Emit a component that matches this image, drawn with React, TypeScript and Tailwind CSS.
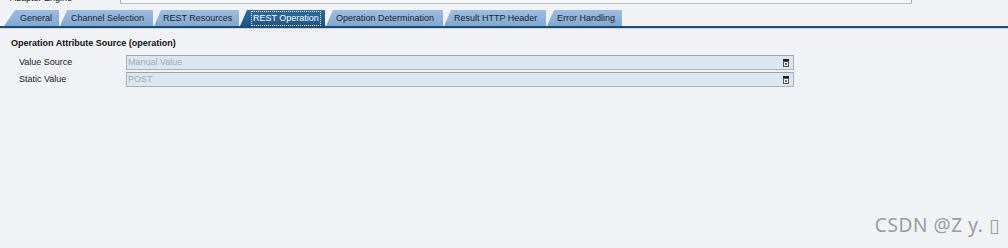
import React from "react";

const tabs = [
  { label: "General", w: 56, slant: 11, pl: 16 },
  { label: "Channel Selection", w: 94, pl: 11 },
  { label: "REST Resources", w: 86, pl: 9 },
  { label: "REST Operation", w: 86, pl: 11, active: true },
  { label: "Operation Determination", w: 118, pl: 10 },
  { label: "Result HTTP Header", w: 103, pl: 10 },
  { label: "Error Handling", w: 76, pl: 10 },
];

function DropIcon() {
  return (
    <svg width="6" height="8" viewBox="0 0 6 8" className="shrink-0">
      <rect x="0" y="0" width="6" height="2" fill="#222" />
      <rect x="0.5" y="2.5" width="5" height="5" fill="#f4f4f4" stroke="#555" strokeWidth="1" />
      <rect x="2" y="4" width="2" height="2" fill="#777" />
    </svg>
  );
}

function Field({ value }: { value: string }) {
  return (
    <div className="w-[668px] h-[15px] flex items-center justify-between bg-[#dbe6f1] border border-[#a9b2bb] border-t-[#9aa3ac] pl-[1px] pr-[4px]">
      <span className="text-[9px] text-[#a3abb4] leading-none">{value}</span>
      <DropIcon />
    </div>
  );
}

export default function App() {
  return (
    <div
      className="w-[1008px] h-[248px] bg-[#f0f2f6] overflow-hidden relative"
      style={{ fontFamily: '"Liberation Sans", Arial, sans-serif' }}
    >
      {/* top cut-off row */}
      <div className="flex h-[4px] items-end">
        <div className="w-[120px] h-[4px] overflow-hidden relative">
          <span className="absolute left-[10px] bottom-[0px] text-[9px] leading-none text-[#222] translate-y-[-1px]">
            Adapter Engine
          </span>
        </div>
        <div className="w-[792px] h-[4px] bg-[#f5f6f8] border border-t-0 border-[#aab2ba] border-b-[#b8c0c8]" />
      </div>

      {/* tabs */}
      <div className="mt-[6px] flex items-end pl-[4px] h-[16px]">
        {tabs.map((t, i) => {
          const s = t.slant ?? 7;
          return (
            <div
              key={i}
              className={
                "h-[16px] flex items-center shrink-0 " +
                (t.active
                  ? "bg-gradient-to-b from-[#2d6aa1] to-[#1d5588] text-white"
                  : "bg-gradient-to-b from-[#9dbde0] to-[#82a8d0] text-[#1a2530]")
              }
              style={{
                width: t.w + "px",
                clipPath: `polygon(${s}px 0, calc(100% - 1px) 0, calc(100% - 1px) 100%, 0 100%)`,
                paddingLeft: t.pl + "px",
              }}
            >
              {t.active ? (
                <span className="text-[9px] leading-none border border-dotted border-[#e8eef5] px-[1px] py-[2px] whitespace-nowrap">
                  {t.label}
                </span>
              ) : (
                <span className="text-[9px] leading-none whitespace-nowrap">{t.label}</span>
              )}
            </div>
          );
        })}
      </div>
      <div className="h-[2px] bg-[#1f4a72]" />
      <div className="h-[1px] bg-[#c9d3de]" />

      {/* content */}
      <div className="pl-[11px] pt-[10px]">
        <div className="text-[9px] font-bold leading-none text-[#111]">
          Operation Attribute Source (operation)
        </div>
        <div className="mt-[7px] flex flex-col gap-[2px]">
          <div className="flex items-center">
            <div className="w-[115px] pl-[8px] text-[9px] text-[#1a1a1a] leading-none">Value Source</div>
            <Field value="Manual Value" />
          </div>
          <div className="flex items-center">
            <div className="w-[115px] pl-[8px] text-[9px] text-[#1a1a1a] leading-none">Static Value</div>
            <Field value="POST" />
          </div>
        </div>
      </div>

      {/* watermark */}
      <div
        className="absolute right-[8px] top-[216px] text-[19px] text-[#9c9c9c] leading-none tracking-[0.6px]"
        style={{ fontFamily: '"Noto Sans", "DejaVu Sans", sans-serif' }}
      >
        CSDN @Z y. ▯
      </div>
    </div>
  );
}
